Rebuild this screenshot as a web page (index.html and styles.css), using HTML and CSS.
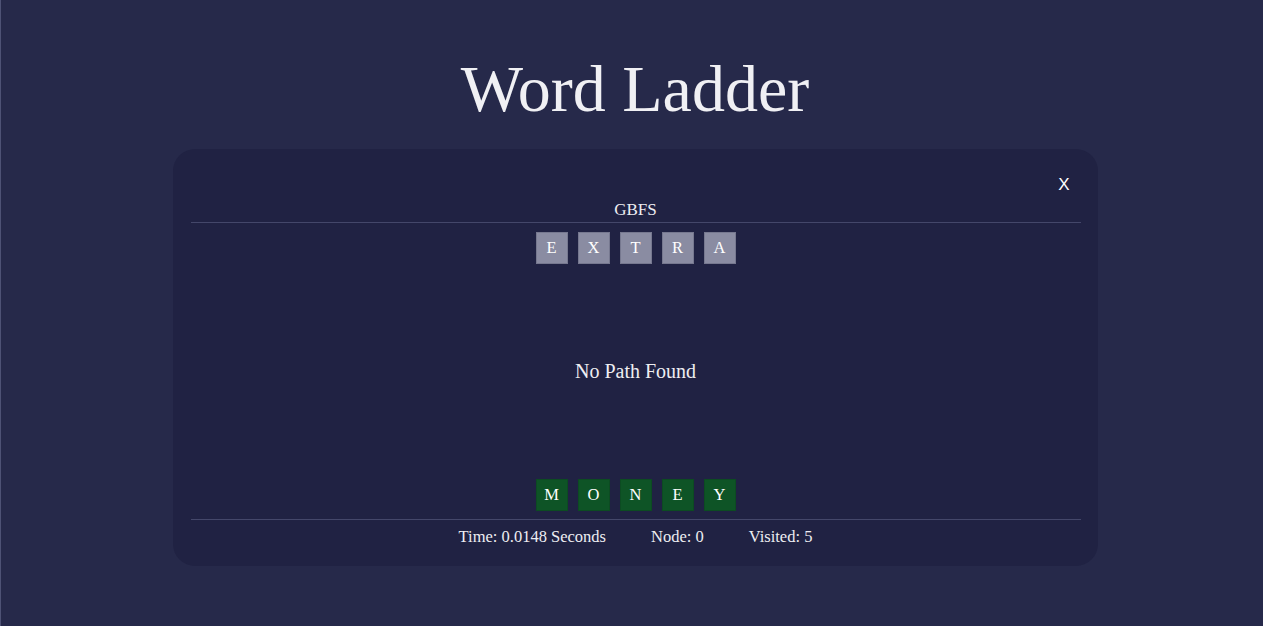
FILE: index.html
```html
<!DOCTYPE html>
<html lang="en">
<head>
<meta charset="utf-8">
<title>Word Ladder</title>
<link rel="stylesheet" href="styles.css">
</head>
<body>
  <main class="page">
    <h1 class="title">Word Ladder</h1>
    <section class="card">
      <div class="card-top">
        <button class="close">X</button>
      </div>
      <div class="algo">GBFS</div>
      <div class="tiles">
        <span class="tile gray">E</span>
        <span class="tile gray">X</span>
        <span class="tile gray">T</span>
        <span class="tile gray">R</span>
        <span class="tile gray">A</span>
      </div>
      <div class="result">No Path Found</div>
      <div class="tiles">
        <span class="tile green">M</span>
        <span class="tile green">O</span>
        <span class="tile green">N</span>
        <span class="tile green">E</span>
        <span class="tile green">Y</span>
      </div>
      <div class="stats">
        <span>Time: 0.0148 Seconds</span>
        <span>Node: 0</span>
        <span>Visited: 5</span>
      </div>
    </section>
  </main>
</body>
</html>
```

FILE: styles.css
```css
html, body {
  margin: 0;
  padding: 0;
  height: 100%;
}

body {
  background: #26294a;
  color: #eeeef2;
  font-family: "Liberation Serif", "Times New Roman", serif;
  border-left: 1px solid #4e5275;
  box-sizing: border-box;
  overflow: hidden;
}

.page {
  padding-left: 6px;
  display: flex;
  flex-direction: column;
  align-items: center;
}

.title {
  margin: 52px 0 0;
  font-weight: normal;
  font-size: 66px;
  line-height: 74px;
  color: #f0f0f4;
}

.card {
  margin-top: 23px;
  width: 925px;
  height: 417px;
  box-sizing: border-box;
  background: #202243;
  border-radius: 22px;
  padding: 18px 17px 0 18px;
  display: flex;
  flex-direction: column;
}

.card-top {
  display: flex;
  justify-content: flex-end;
  height: 33px;
}

.close {
  background: none;
  border: none;
  color: #ffffff;
  font-family: "Liberation Sans", Arial, sans-serif;
  font-size: 17px;
  padding: 0;
  margin: 9px 11px 0 0;
  height: 18px;
  line-height: 18px;
}

.algo {
  text-align: center;
  font-size: 17px;
  line-height: 19px;
  padding-bottom: 3px;
  border-bottom: 1px solid #44476a;
}

.tiles {
  display: flex;
  justify-content: center;
  gap: 10px;
}

.card-top + .algo + .tiles {
  margin-top: 9px;
}

.tile {
  width: 32px;
  height: 32px;
  box-sizing: border-box;
  display: flex;
  align-items: center;
  justify-content: center;
  font-size: 16.5px;
  color: #ffffff;
}

.gray {
  background: #8a8ca2;
  border: 1px solid #76788f;
}

.green {
  background: #0e5426;
  border: 1px solid #0c4b22;
}

.result {
  flex: 1;
  display: flex;
  align-items: center;
  justify-content: center;
  font-size: 20px;
}

.stats {
  margin-top: 8px;
  border-top: 1px solid #44476a;
  display: flex;
  justify-content: center;
  gap: 45px;
  font-size: 16.5px;
  line-height: 18px;
  padding: 8px 0 20px;
}
```
